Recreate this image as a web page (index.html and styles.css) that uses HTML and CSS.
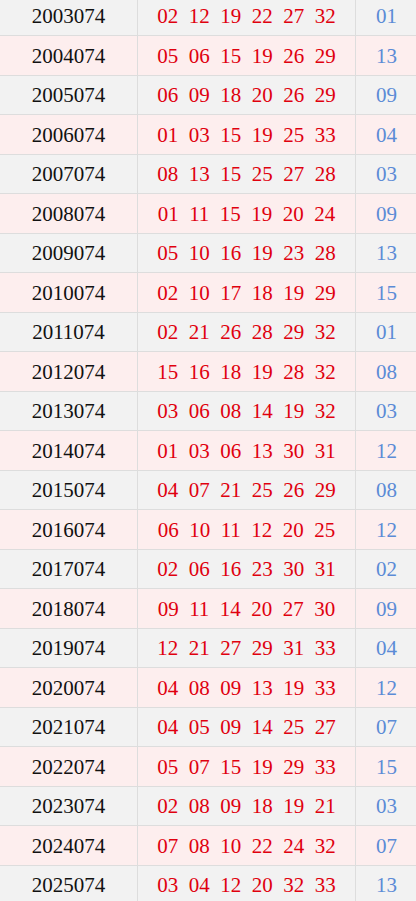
FILE: index.html
```html
<!DOCTYPE html>
<html lang="zh-CN">
<head>
  <meta charset="UTF-8" />
  <meta name="viewport" content="width=device-width, initial-scale=1.0"/>
  <title>历史同期开奖</title>
  <link rel="stylesheet" href="styles.css">
</head>
<body>

  <table class="history">
    <tbody id="rows"></tbody>
  </table>

  <script>
    const draws = [
      ["2003074", "02 12 19 22 27 32", "01"],
      ["2004074", "05 06 15 19 26 29", "13"],
      ["2005074", "06 09 18 20 26 29", "09"],
      ["2006074", "01 03 15 19 25 33", "04"],
      ["2007074", "08 13 15 25 27 28", "03"],
      ["2008074", "01 11 15 19 20 24", "09"],
      ["2009074", "05 10 16 19 23 28", "13"],
      ["2010074", "02 10 17 18 19 29", "15"],
      ["2011074", "02 21 26 28 29 32", "01"],
      ["2012074", "15 16 18 19 28 32", "08"],
      ["2013074", "03 06 08 14 19 32", "03"],
      ["2014074", "01 03 06 13 30 31", "12"],
      ["2015074", "04 07 21 25 26 29", "08"],
      ["2016074", "06 10 11 12 20 25", "12"],
      ["2017074", "02 06 16 23 30 31", "02"],
      ["2018074", "09 11 14 20 27 30", "09"],
      ["2019074", "12 21 27 29 31 33", "04"],
      ["2020074", "04 08 09 13 19 33", "12"],
      ["2021074", "04 05 09 14 25 27", "07"],
      ["2022074", "05 07 15 19 29 33", "15"],
      ["2023074", "02 08 09 18 19 21", "03"],
      ["2024074", "07 08 10 22 24 32", "07"],
      ["2025074", "03 04 12 20 32 33", "13"]
    ];

    const tbody = document.getElementById("rows");
    draws.forEach(d => {
      const tr = document.createElement("tr");
      const reds = d[1].split(" ").map(n => `<span>${n}</span>`).join("");
      tr.innerHTML = `<td class="issue">${d[0]}</td><td class="red">${reds}</td><td class="blue">${d[2]}</td>`;
      tbody.appendChild(tr);
    });
  </script>

</body>
</html>
```

FILE: styles.css
```css
body {
  margin: 0;
  background: #f2f2f2;
  font-family: "Liberation Serif", "Noto Sans CJK SC", serif;
  font-size: 21px;
  overflow: hidden;
}
.history {
  width: 418px;
  margin-top: -4.5px;
  border-collapse: collapse;
  table-layout: fixed;
}
.history tr {
  height: 39.5px;
  background: #f2f2f2;
}
.history tr:nth-child(even) {
  background: #fdeeee;
}
.history td {
  border: 1px solid #dddddd;
  text-align: center;
  padding: 2px 0 0;
}
.history td:first-child {
  border-left: none;
}
.issue {
  width: 137px;
  color: #111;
}
.red {
  width: 217px;
  color: #e0000e;
}
.red span {
  display: inline-block;
  padding: 0 5.25px;
}
.blue {
  color: #5b8bd6;
}
```
